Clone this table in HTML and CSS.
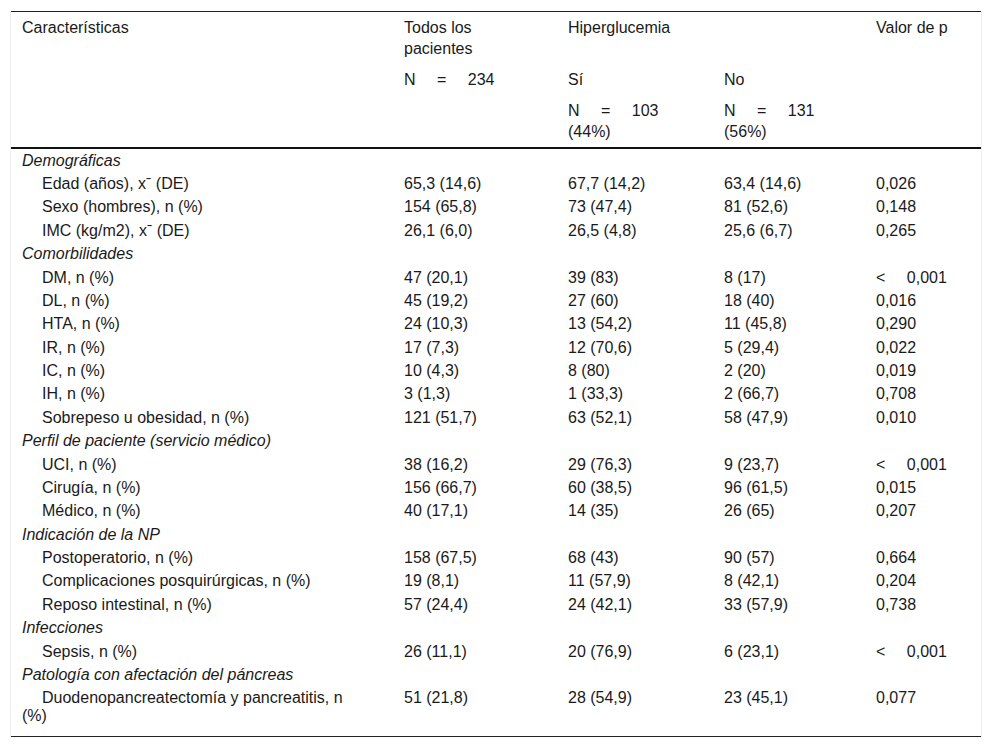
FILE: index.html
```html
<!DOCTYPE html>
<html lang="es">
<head>
<meta charset="utf-8">
<title>Características</title>
<link rel="stylesheet" href="styles.css">
</head>
<body>
<div class="wrap">
<table class="tbl">
  <colgroup>
    <col class="c1"><col class="c2"><col class="c3"><col class="c4"><col class="c5">
  </colgroup>
  <thead>
    <tr>
      <th rowspan="3" class="top">Características</th>
      <th class="top">Todos los<br>pacientes</th>
      <th colspan="2" class="top">Hiperglucemia</th>
      <th rowspan="3" class="top">Valor de p</th>
    </tr>
    <tr>
      <th rowspan="2" class="top"><span class="ws">N = 234</span></th>
      <th>Sí</th>
      <th>No</th>
    </tr>
    <tr>
      <th><span class="ws">N = 103</span><br>(44%)</th>
      <th><span class="ws">N = 131</span><br>(56%)</th>
    </tr>
  </thead>
  <tbody>
    <tr class="cat"><td colspan="5">Demográficas</td></tr>
    <tr><td class="sub">Edad (años), xˉ (DE)</td><td>65,3 (14,6)</td><td>67,7 (14,2)</td><td>63,4 (14,6)</td><td>0,026</td></tr>
    <tr><td class="sub">Sexo (hombres), n (%)</td><td>154 (65,8)</td><td>73 (47,4)</td><td>81 (52,6)</td><td>0,148</td></tr>
    <tr><td class="sub">IMC (kg/m2), xˉ (DE)</td><td>26,1 (6,0)</td><td>26,5 (4,8)</td><td>25,6 (6,7)</td><td>0,265</td></tr>
    <tr class="cat"><td colspan="5">Comorbilidades</td></tr>
    <tr><td class="sub">DM, n (%)</td><td>47 (20,1)</td><td>39 (83)</td><td>8 (17)</td><td><span class="ws">&lt; 0,001</span></td></tr>
    <tr><td class="sub">DL, n (%)</td><td>45 (19,2)</td><td>27 (60)</td><td>18 (40)</td><td>0,016</td></tr>
    <tr><td class="sub">HTA, n (%)</td><td>24 (10,3)</td><td>13 (54,2)</td><td>11 (45,8)</td><td>0,290</td></tr>
    <tr><td class="sub">IR, n (%)</td><td>17 (7,3)</td><td>12 (70,6)</td><td>5 (29,4)</td><td>0,022</td></tr>
    <tr><td class="sub">IC, n (%)</td><td>10 (4,3)</td><td>8 (80)</td><td>2 (20)</td><td>0,019</td></tr>
    <tr><td class="sub">IH, n (%)</td><td>3 (1,3)</td><td>1 (33,3)</td><td>2 (66,7)</td><td>0,708</td></tr>
    <tr><td class="sub">Sobrepeso u obesidad, n (%)</td><td>121 (51,7)</td><td>63 (52,1)</td><td>58 (47,9)</td><td>0,010</td></tr>
    <tr class="cat"><td colspan="5">Perfil de paciente (servicio médico)</td></tr>
    <tr><td class="sub">UCI, n (%)</td><td>38 (16,2)</td><td>29 (76,3)</td><td>9 (23,7)</td><td><span class="ws">&lt; 0,001</span></td></tr>
    <tr><td class="sub">Cirugía, n (%)</td><td>156 (66,7)</td><td>60 (38,5)</td><td>96 (61,5)</td><td>0,015</td></tr>
    <tr><td class="sub">Médico, n (%)</td><td>40 (17,1)</td><td>14 (35)</td><td>26 (65)</td><td>0,207</td></tr>
    <tr class="cat"><td colspan="5">Indicación de la NP</td></tr>
    <tr><td class="sub">Postoperatorio, n (%)</td><td>158 (67,5)</td><td>68 (43)</td><td>90 (57)</td><td>0,664</td></tr>
    <tr><td class="sub">Complicaciones posquirúrgicas, n (%)</td><td>19 (8,1)</td><td>11 (57,9)</td><td>8 (42,1)</td><td>0,204</td></tr>
    <tr><td class="sub">Reposo intestinal, n (%)</td><td>57 (24,4)</td><td>24 (42,1)</td><td>33 (57,9)</td><td>0,738</td></tr>
    <tr class="cat"><td colspan="5">Infecciones</td></tr>
    <tr><td class="sub">Sepsis, n (%)</td><td>26 (11,1)</td><td>20 (76,9)</td><td>6 (23,1)</td><td><span class="ws">&lt; 0,001</span></td></tr>
    <tr class="cat"><td colspan="5">Patología con afectación del páncreas</td></tr>
    <tr class="last"><td class="sub">Duodenopancreatectomía y pancreatitis, n (%)</td><td>51 (21,8)</td><td>28 (54,9)</td><td>23 (45,1)</td><td>0,077</td></tr>
  </tbody>
</table>
</div>
</body>
</html>
```

FILE: styles.css
```css
html, body {
  margin: 0;
  padding: 0;
  background: #ffffff;
}

body {
  font-family: "Liberation Sans", Arial, sans-serif;
  font-size: 16px;
  color: #1a1a1a;
}

.wrap {
  margin: 11px 0 0 10px;
  width: 970px;
  border-left: 1px solid #ececec;
  border-right: 1px solid #ececec;
}

.tbl {
  width: 970px;
  border-collapse: collapse;
  table-layout: fixed;
  border-top: 1px solid #222;
  border-bottom: 1px solid #222;
}

.c1 { width: 382px; }
.c2 { width: 164px; }
.c3 { width: 156px; }
.c4 { width: 152px; }
.c5 { width: 116px; }

.tbl th {
  font-weight: normal;
  text-align: left;
  vertical-align: top;
  line-height: 21px;
  padding: 5px 11px 5px 11px;
}

.tbl thead tr:last-child th,
.tbl thead th[rowspan] {
  border-bottom: 2px solid #111;
}

.tbl td {
  vertical-align: top;
  line-height: 18px;
  padding: 2.7px 30px 2.7px 11px;
}

.tbl td:last-child {
  padding-right: 6px;
}

.tbl .cat td {
  font-style: italic;
}

.tbl td.sub {
  text-indent: 20px;
}

.tbl .last td {
  padding-bottom: 11px;
}

.ws {
  word-spacing: 17px;
  white-space: nowrap;
}
```
